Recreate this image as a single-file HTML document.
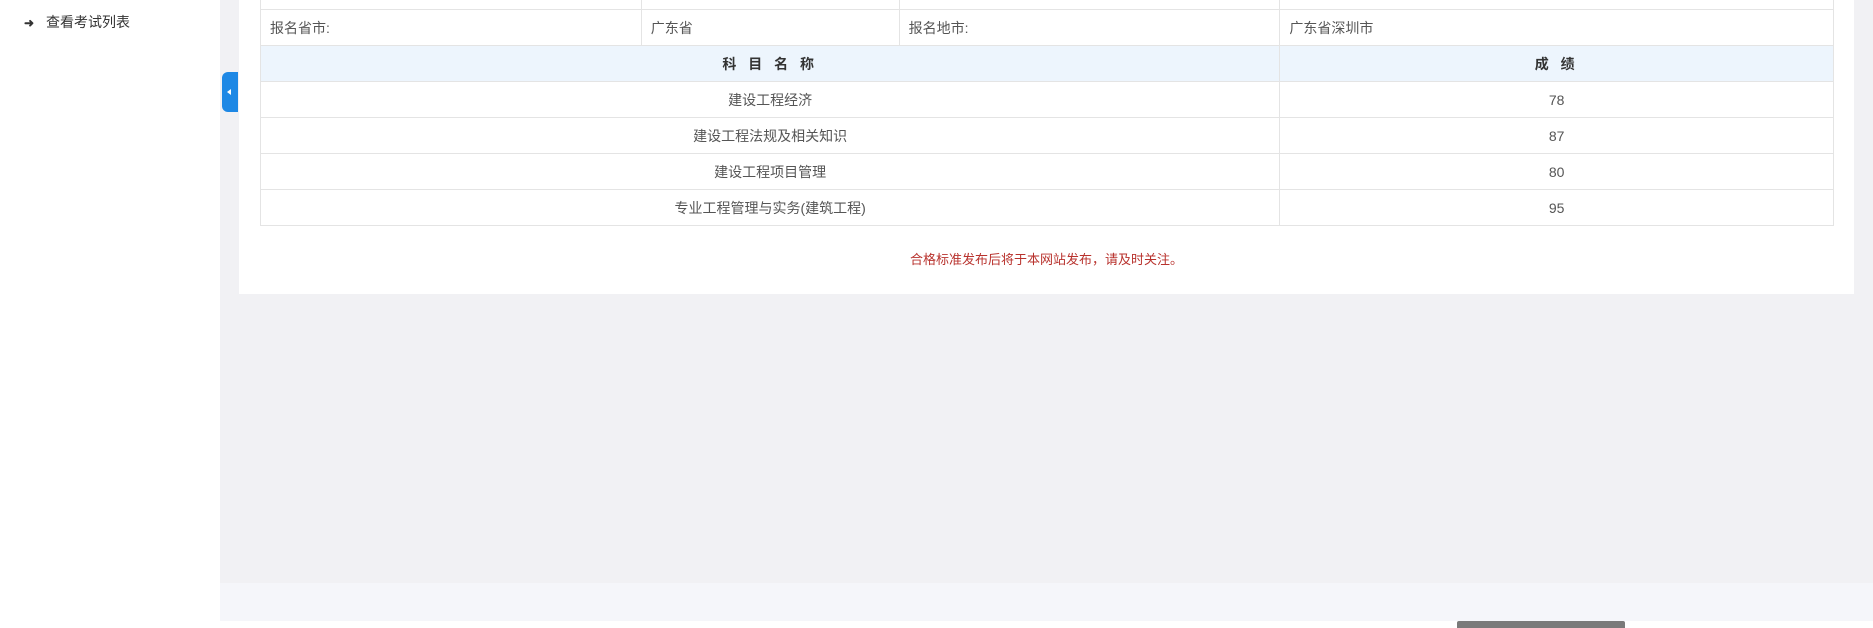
<!DOCTYPE html>
<html><head><meta charset="utf-8"><style>
*{margin:0;padding:0;box-sizing:border-box}
body{width:1873px;height:628px;overflow:hidden;background:#fff;font-family:"Liberation Sans","Noto Sans CJK SC",sans-serif;color:#333;position:relative}
.side{position:absolute;left:0;top:0;width:220px;height:621px;background:#fff}
.side .item{position:absolute;left:24px;top:12px;font-size:14px;color:#333}
.side .item b{display:inline-block;width:15px;font-size:12px;font-weight:bold;margin-right:7px}
.gray{position:absolute;left:220px;top:0;width:1653px;height:583px;background:#f1f1f4}
.strip{position:absolute;left:220px;top:583px;width:1653px;height:38px;background:#f5f6fa}
.tab{position:absolute;left:222px;top:72px;width:16px;height:40px;background:#1e88e5;border-radius:6px 0 0 6px}
.tab:after{content:"";position:absolute;left:5px;top:17px;border:3px solid transparent;border-right:4px solid #fff;border-left:0}
.panel{position:absolute;left:239px;top:0;width:1615px;height:294px;background:#fff}
table{position:absolute;left:21px;top:-27px;width:1574px;border-collapse:collapse;font-size:14px}
td{border:1px solid #e4e4e4;height:36px;padding:0 9px;color:#555}
tr.h td{background:#edf5fd;font-weight:bold;text-align:center;color:#333;letter-spacing:4px}
td.c{text-align:center}
.red{position:absolute;left:0;width:100%;top:249px;text-align:center;color:#b8322d;font-size:13px}
.dark{position:absolute;left:1457px;top:621px;width:168px;height:7px;background:#7a7a7a;border-radius:2px 2px 0 0}
</style></head><body>
<div class="side"><div class="item"><b>➜</b>查看考试列表</div></div>
<div class="gray"></div><div class="strip"></div>
<div class="tab"></div>
<div class="panel">
<table>
<colgroup><col style="width:381px"><col style="width:258px"><col style="width:381px"><col style="width:554px"></colgroup>
<tr><td></td><td></td><td></td><td></td></tr>
<tr><td>报名省市:</td><td>广东省</td><td>报名地市:</td><td>广东省深圳市</td></tr>
<tr class="h"><td colspan="3">科 目 名 称</td><td>成 绩</td></tr>
<tr><td colspan="3" class="c">建设工程经济</td><td class="c">78</td></tr>
<tr><td colspan="3" class="c">建设工程法规及相关知识</td><td class="c">87</td></tr>
<tr><td colspan="3" class="c">建设工程项目管理</td><td class="c">80</td></tr>
<tr><td colspan="3" class="c">专业工程管理与实务(建筑工程)</td><td class="c">95</td></tr>
</table>
<div class="red">合格标准发布后将于本网站发布，请及时关注。</div>
</div>
<div class="dark"></div>
</body></html>
